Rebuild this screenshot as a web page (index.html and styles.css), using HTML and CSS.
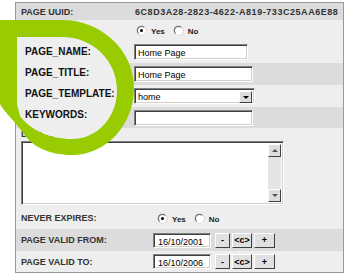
FILE: index.html
```html
<!DOCTYPE html>
<html lang="en">
<head>
    <meta charset="UTF-8">
    <title>Page properties</title>
    <link rel="stylesheet" href="styles.css">
</head>
<body>
    <div class="panel">
        <div class="row dark r-uuid">
            <span class="lbl">PAGE UUID:</span>
            <span class="uuid-val">6C8D3A28-2823-4622-A819-733C25AA6E88</span>
        </div>
        <div class="row r-radio">
            <span class="lbl"></span>
            <span class="radios">
                <span class="radio on"></span><span class="rtxt">Yes</span>
                <span class="radio"></span><span class="rtxt">No</span>
            </span>
        </div>
        <!-- labels of the next 4 rows sit in the callout -->
        <div class="row r-field">
            <span class="lbl"></span>
            <span class="input w113">Home Page</span>
        </div>
        <div class="row dark r-field">
            <span class="lbl"></span>
            <span class="input w118">Home Page</span>
        </div>
        <div class="row r-field">
            <span class="lbl"></span>
            <span class="select"><span class="sel-txt">home</span><span class="sel-btn"><i></i></span></span>
        </div>
        <div class="row dark r-kw">
            <span class="lbl"></span>
            <span class="input w118"></span>
        </div>
        <div class="row r-desc-lbl">
            <span class="lbl">DESCRIPTION:</span>
        </div>
        <div class="row r-desc">
            <div class="textbox">
                <div class="text-area"></div>
                <div class="vscroll">
                    <span class="sb-btn"><i class="up"></i></span>
                    <span class="sb-track"></span>
                    <span class="sb-btn"><i class="down"></i></span>
                </div>
            </div>
        </div>
        <div class="row wide r-field">
            <span class="lbl">NEVER EXPIRES:</span>
            <span class="radios">
                <span class="radio on"></span><span class="rtxt">Yes</span>
                <span class="radio"></span><span class="rtxt">No</span>
            </span>
        </div>
        <div class="row dark wide r-field">
            <span class="lbl">PAGE VALID FROM:</span>
            <span class="date">16/10/2001</span>
            <span class="btns"><span class="btn b-minus">-</span><span class="btn b-c">&lt;c&gt;</span><span class="btn b-plus">+</span></span>
        </div>
        <div class="row wide r-last">
            <span class="lbl">PAGE VALID TO:</span>
            <span class="date">16/10/2006</span>
            <span class="btns"><span class="btn b-minus">-</span><span class="btn b-c">&lt;c&gt;</span><span class="btn b-plus">+</span></span>
        </div>
    </div>

    <!-- green callout over the first labels -->
    <div class="callout">
        <svg class="ring" width="134" height="135" viewBox="0 0 134 135">
            <path fill="#eeeeee" d="M17,17 H62 C92,17 117,40 117,70 C117,98 97,119 72,119 C50,119 30,110 20,96 L17,84 Z"/>
            <path fill="#99cc00" fill-rule="evenodd" d="M0,0 H62 C101,0 134,30 134,68 C134,105 106,135 72,135 C48,135 32,126 24,114 C14,100 4,92 0,84 Z M17,17 H62 C92,17 117,40 117,70 C117,98 97,119 72,119 C50,119 30,110 20,96 L17,84 Z"/>
        </svg>
        <div class="call-list">
            <div>PAGE_NAME:</div>
            <div>PAGE_TITLE:</div>
            <div>PAGE_TEMPLATE:</div>
            <div>KEYWORDS:</div>
        </div>
    </div>
</body>
</html>
```

FILE: styles.css
```css
body{margin:0;background:#fff;font-family:"Liberation Sans",Arial,sans-serif;width:345px;height:274px;overflow:hidden;position:relative}
.panel{margin:2px 0 0 15px;width:327px;border:1px solid #999;background:#eee}
.row{display:flex;align-items:center;padding-left:5px;background:#eee}
.row.dark{background:#dcdcdc}
.lbl{width:113px;flex:none;font-size:9px;font-weight:bold;color:#333}
.wide .lbl{width:132px}
.r-uuid{height:17px}
.r-radio{height:21px}
.r-field{height:22px}
.r-kw,.r-last{height:21px}
.r-desc-lbl{height:11px;align-items:flex-end}
.r-desc{height:68px;align-items:flex-start}
.uuid-val{font-size:9px;font-weight:bold;color:#333;letter-spacing:.55px;margin-left:1px}

.radios{display:flex;align-items:center;font-size:8px;font-weight:bold;color:#222}
.r-radio .radios{margin-left:3px}
.wide .radios{margin-left:5px}
.radio{width:7px;height:7px;border-radius:50%;border:1px solid;border-color:#666 #fff #fff #666;background:#fff;position:relative;box-shadow:0 0 0 .5px #bbb}
.radio.on::after{content:"";position:absolute;left:2px;top:2px;width:3px;height:3px;border-radius:50%;background:#000}
.rtxt{margin:2px 9px 0 5px}

.input,.date,.select,.textbox{background:#fff;border:1px solid;border-color:#808080 #fff #fff #808080;box-shadow:inset 1px 1px 0 #404040,inset -1px -1px 0 #d4d0c8;box-sizing:border-box}
.input{height:16px;font-size:9px;color:#000;padding:3px 0 0 3px}
.w113{width:114px}
.w118{width:119px}
.select{width:121px;height:16px;display:flex;justify-content:space-between;padding:2px}
.sel-txt{font-size:9px;padding:1px 0 0 1px}
.sel-btn{width:13px;height:12px;background:#ddd;box-sizing:border-box;border:1px solid;border-color:#fff #404040 #404040 #fff;display:flex;align-items:center;justify-content:center}
.sel-btn i{width:0;height:0;border-left:3px solid transparent;border-right:3px solid transparent;border-top:3px solid #000}

.textbox{margin-top:2px;width:263px;height:64px;display:flex;padding:2px}
.text-area{flex:1}
.vscroll{width:13px;display:flex;flex-direction:column;background:#e4e4e4}
.sb-btn{height:13px;flex:none;background:#ddd;box-sizing:border-box;border:1px solid;border-color:#fff #404040 #404040 #fff;display:flex;align-items:center;justify-content:center}
.sb-track{flex:1}
.sb-btn i{width:0;height:0;border-left:3px solid transparent;border-right:3px solid transparent}
.sb-btn .up{border-bottom:3px solid #555}
.sb-btn .down{border-top:3px solid #555}

.date{width:58px;height:15px;font-size:9px;padding:3px 0 0 4px}
.btns{display:flex;gap:2px;margin-left:4px}
.btn{height:15px;box-sizing:border-box;background:#e0e0e0;border:1px solid;border-color:#fff #404040 #404040 #fff;font-size:9px;font-weight:bold;display:flex;align-items:center;justify-content:center}
.b-minus{width:15px}
.b-c{width:20px}
.b-plus{width:21px}

.callout{position:absolute;left:0;top:20px;width:134px;height:135px}
.ring{position:absolute;left:0;top:0}
.call-list{position:relative;padding:21px 0 0 25px;font-size:10px;font-weight:bold;color:#111;line-height:21px}
```
